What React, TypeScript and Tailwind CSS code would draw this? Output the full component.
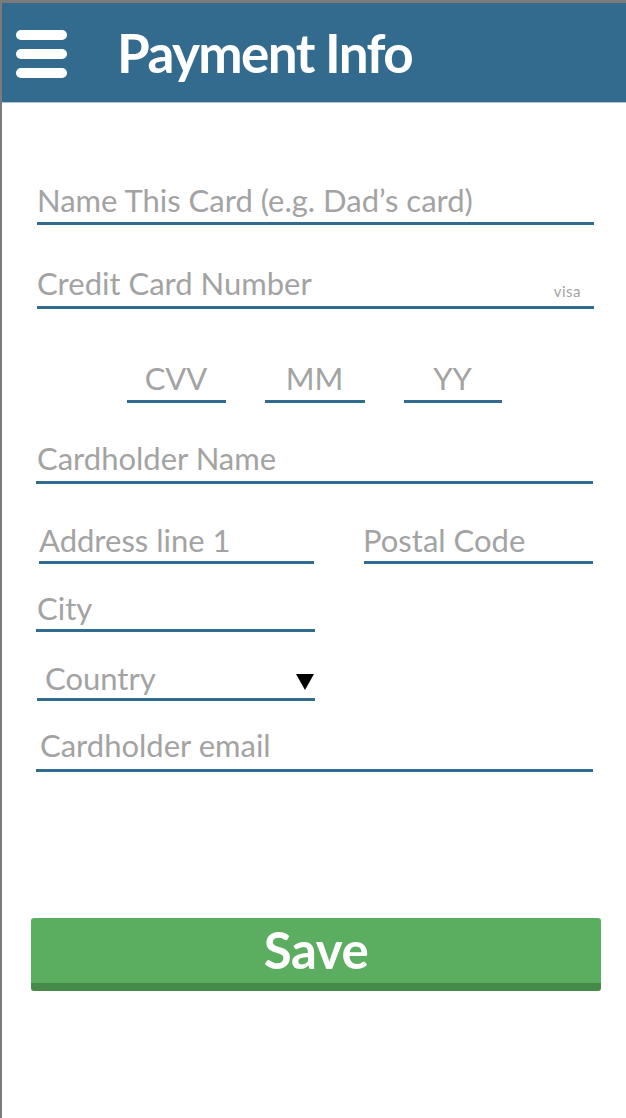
import React from "react";

const font = { fontFamily: "Lato, 'Noto Sans', sans-serif" };

function Line({ className = "" }: { className?: string }) {
  return <div className={`h-[3px] bg-[#316b8f] ${className}`} />;
}

export default function App() {
  return (
    <div className="w-[626px] h-[1118px] bg-white border-l-2 border-t-[3px] border-[#7b7b7b] box-border overflow-hidden" style={font}>
      <header className="h-[100px] bg-[#336b8e] border-b border-[#a9c6da] flex items-center">
        <div className="ml-[14px] mt-[3px] flex flex-col gap-[9px]">
          <div className="w-[51px] h-[10px] rounded-full bg-white" />
          <div className="w-[51px] h-[10px] rounded-full bg-white" />
          <div className="w-[51px] h-[10px] rounded-full bg-white" />
        </div>
        <h1 className="ml-[50px] mt-[-1px] text-white font-bold text-[53px] leading-none tracking-[-1.6px]">Payment Info</h1>
      </header>

      <div className="text-[#a3a3a3] text-[31px] leading-[32px]">
        {/* Name this card */}
        <div className="mt-[81px] ml-[35px] mr-[32px]">
          <div>Name This Card (e.g. Dad’s card)</div>
          <Line className="mt-[6px]" />
        </div>

        {/* Credit card number */}
        <div className="mt-[42px] ml-[35px] mr-[32px]">
          <div className="flex items-end justify-between">
            <span>Credit Card Number</span>
            <span className="text-[15px] leading-[16px] mr-[13px] mb-[0px] tracking-[0.5px]">visa</span>
          </div>
          <Line className="mt-[7px]" />
        </div>

        {/* CVV MM YY */}
        <div className="mt-[53px] flex justify-center gap-[39px] text-center">
          <div className="w-[99px]">
            <div>CVV</div>
            <Line className="mt-[6px]" />
          </div>
          <div className="w-[100px]">
            <div>MM</div>
            <Line className="mt-[6px]" />
          </div>
          <div className="w-[98px]">
            <div>YY</div>
            <Line className="mt-[6px]" />
          </div>
        </div>

        {/* Cardholder name */}
        <div className="mt-[39px] ml-[34px] mr-[33px]">
          <div className="pl-[1px]">Cardholder Name</div>
          <Line className="mt-[7px]" />
        </div>

        {/* Address + postal */}
        <div className="mt-[40px] ml-[37px] mr-[33px] flex gap-[50px]">
          <div className="w-[275px]">
            <div>Address line 1</div>
            <Line className="mt-[5px]" />
          </div>
          <div className="flex-1">
            <div className="ml-[-1px]">Postal Code</div>
            <Line className="mt-[5px]" />
          </div>
        </div>

        {/* City */}
        <div className="mt-[28px] ml-[34px] w-[279px]">
          <div className="pl-[1px]">City</div>
          <Line className="mt-[5px]" />
        </div>

        {/* Country */}
        <div className="mt-[30px] ml-[35px] w-[278px]">
          <div className="flex items-center justify-between pl-[8px]">
            <span>Country</span>
            <svg width="18" height="16" viewBox="0 0 18 16" className="mt-[8px] mr-[1px]">
              <polygon points="0,0 18,0 9,16" fill="#000" />
            </svg>
          </div>
          <Line className="mt-[4px]" />
        </div>

        {/* Email */}
        <div className="mt-[28px] ml-[34px] mr-[33px]">
          <div className="pl-[4px]">Cardholder email</div>
          <Line className="mt-[8px]" />
        </div>

        {/* Save */}
        <div className="mt-[146px] ml-[29px] mr-[25px] h-[73px] rounded-[3px] bg-[#5bad5f] border-b-[8px] border-[#468a49] flex items-center justify-center">
          <span className="text-white font-bold text-[51px] leading-none mt-[-2px] tracking-[-0.5px]">Save</span>
        </div>
      </div>
    </div>
  );
}
